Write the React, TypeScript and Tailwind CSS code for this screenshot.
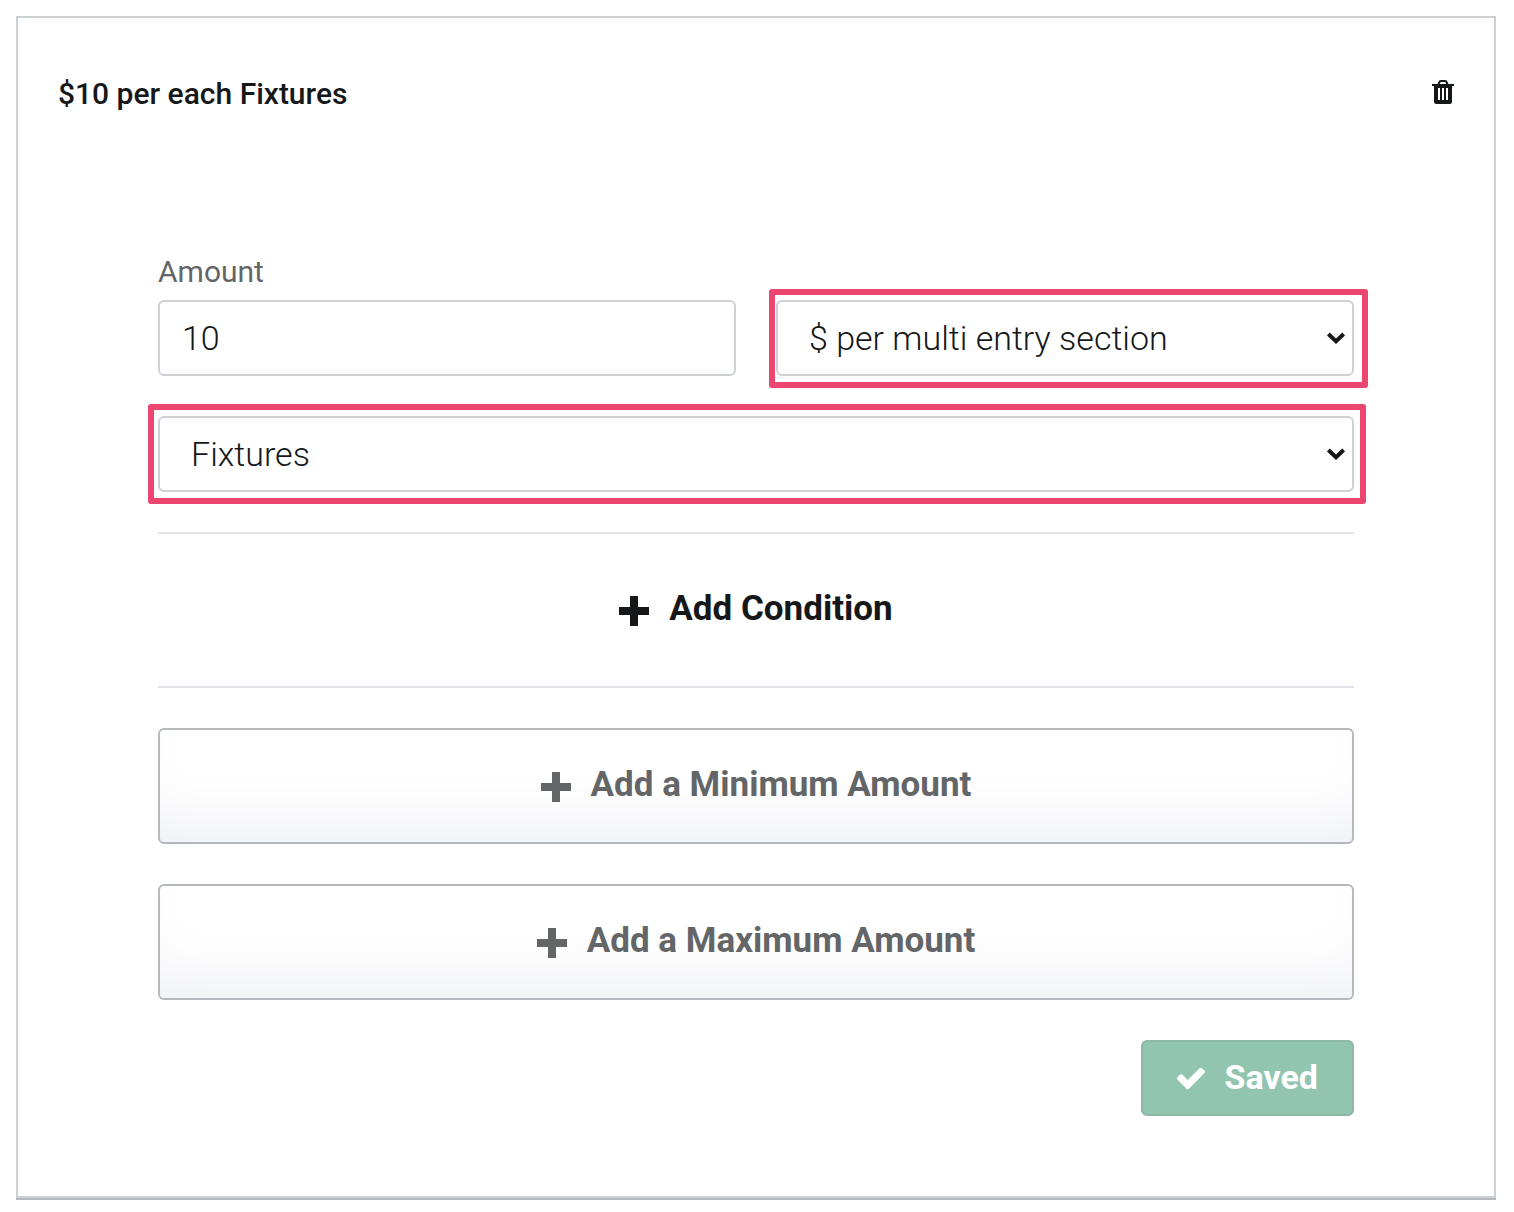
import { useState } from "react";
import type { ReactNode } from "react";
import clsx from "clsx";

function TrashIcon() {
  return (
    <svg viewBox="0 0 22 24" className="h-6 w-[22px]" aria-hidden>
      <path
        d="M6.500 4.500L7.200 2.400Q7.600 1 9 1h4q1.400 0 1.800 1.400l.7 2.100"
        fill="none"
        stroke="currentColor"
        strokeWidth="2"
      />
      <path
        fill="currentColor"
        fillRule="evenodd"
        d="M0 4h22v2h-2v15.500q0 2.500-2.500 2.500h-13Q2 24 2 21.500V6H0zM6 8v12h2V8zM10 8v12h2V8zM14 8v12h2V8z"
      />
    </svg>
  );
}

function PlusIcon() {
  return (
    <svg viewBox="0 0 30 30" className="size-[30px]" aria-hidden>
      <path fill="currentColor" d="M11 0h8v11h11v8H19v11h-8V19H0v-8h11z" />
    </svg>
  );
}

function CheckIcon() {
  return (
    <svg viewBox="121 398 1550 1126" className="h-[22px] w-7" aria-hidden>
      <path
        fill="currentColor"
        d="M1671 566q0 40-28 68l-724 724-136 136q-28 28-68 28t-68-28l-136-136-362-362q-28-28-28-68t28-68l136-136q28-28 68-28t68 28l294 295 656-657q28-28 68-28t68 28l136 136q28 28 28 68z"
      />
    </svg>
  );
}

type SelectFieldProps = {
  label: string;
  options: string[];
  frameClassName: string;
};

function SelectField({ label, options, frameClassName }: SelectFieldProps) {
  return (
    <div className="relative min-w-0">
      <select
        aria-label={label}
        className="h-[76px] w-full appearance-none rounded-md border-2 border-[#cdd1d6] bg-white pr-12 pl-[31px] text-[34px] font-light text-[#151719]"
      >
        {options.map((option) => (
          <option key={option}>{option}</option>
        ))}
      </select>
      <svg
        viewBox="0 0 18 12"
        className="pointer-events-none absolute top-8 right-[9px] h-3 w-[18px] text-[#151719]"
        aria-hidden
      >
        <path
          d="M1.300 2L9 9.200L16.700 2"
          fill="none"
          stroke="currentColor"
          strokeWidth="4"
        />
      </svg>
      <span
        className={clsx(
          "pointer-events-none absolute rounded-[3px] border-[6px] border-[#eb466f]",
          frameClassName,
        )}
        aria-hidden
      />
    </div>
  );
}

function AddLimitButton({ children }: { children: ReactNode }) {
  return (
    <button
      type="button"
      className="flex h-[116px] w-full items-center justify-center gap-5 rounded-md border-2 border-[#b5b8bd] bg-white pt-0.5 text-[35px] font-bold text-[#636567] shadow-[inset_0_-50px_60px_-30px_#eff0f4]"
    >
      <PlusIcon />
      <span className="pb-1">{children}</span>
    </button>
  );
}

export default function App() {
  const [amount, setAmount] = useState("10");

  return (
    <div className="min-h-screen bg-white p-4 pr-[18px] pb-3 font-['Roboto',sans-serif] text-[#151719]">
      <section className="border-2 border-[#cdd1d6] pt-[54px] pb-20 shadow-[0_2px_0_#b5b8bd]">
        <header className="flex items-center justify-between px-10">
          <h2 className="pt-1 text-[30px] leading-9 font-medium">
            $10 per each Fixtures
          </h2>
          <button type="button" aria-label="Delete" className="cursor-pointer">
            <TrashIcon />
          </button>
        </header>

        <form className="mt-[140px] px-[140px]">
          <div className="grid grid-cols-2 items-end gap-10">
            <div className="min-w-0">
              <label
                htmlFor="amount"
                className="block h-12 text-[30px] leading-10 text-[#636567]"
              >
                Amount
              </label>
              <input
                id="amount"
                type="text"
                value={amount}
                onChange={(e) => setAmount(e.target.value)}
                className="block h-[76px] w-full rounded-md border-2 border-[#cdd1d6] bg-white px-[22px] text-[34px] font-light"
              />
            </div>
            <SelectField
              label="Amount type"
              options={["$ per multi entry section"]}
              frameClassName="-top-[11px] -right-[14px] -bottom-3 -left-[7px]"
            />
            <div className="col-span-2">
              <SelectField
                label="Section"
                options={["Fixtures"]}
                frameClassName="-top-3 -right-3 -bottom-3 -left-[10px]"
              />
            </div>
          </div>

          <div className="my-10 flex h-[156px] items-center justify-center border-y-2 border-[#e1e4e8]">
            <button
              type="button"
              className="flex items-center gap-5 pt-0.5 text-[35px] font-bold"
            >
              <PlusIcon />
              <span className="pb-1">Add Condition</span>
            </button>
          </div>

          <div className="flex flex-col gap-10">
            <AddLimitButton>Add a Minimum Amount</AddLimitButton>
            <AddLimitButton>Add a Maximum Amount</AddLimitButton>
            <button
              type="button"
              className="flex h-[76px] items-center gap-5 self-end rounded-md border-2 border-[#8ab9a7] bg-[#92c5b0] px-[34px] pt-0.5 text-[34px] font-bold text-white"
            >
              <CheckIcon />
              <span className="pb-1">Saved</span>
            </button>
          </div>
        </form>
      </section>
    </div>
  );
}
